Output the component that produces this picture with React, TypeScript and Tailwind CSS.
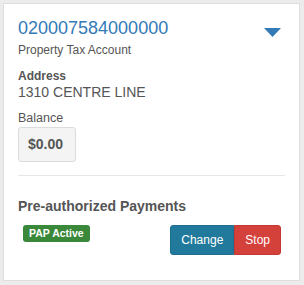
export default function App() {
  return (
    <div className="h-[285px] w-[304px] bg-[#ececec] p-[3px] font-['Liberation_Sans',Arial,sans-serif]">
      <div className="flex h-[278px] w-[297px] flex-col border border-[#dedede] bg-white px-[14px] pt-[14px]">
        {/* Account header */}
        <div className="flex items-start justify-between">
          <div>
            <div className="text-[18px] leading-[20px] text-[#337ab7]">020007584000000</div>
            <div className="mt-1 text-[12px] leading-[17px] text-[#555]">Property Tax Account</div>
          </div>
          <svg className="mr-[4px] mt-[10px]" width="17" height="9" viewBox="0 0 17 9">
            <path d="M0 0 L17 0 L8.5 9 Z" fill="#337ab7" />
          </svg>
        </div>

        {/* Address */}
        <div className="mt-[10px] text-[12px] font-bold leading-[15px] text-[#555]">Address</div>
        <div className="text-[14px] leading-[16px] text-[#555]">1310 CENTRE LINE</div>

        {/* Balance */}
        <div className="mt-[11px] text-[12.5px] leading-[15px] text-[#555]">Balance</div>
        <div className="mt-px flex h-[35px] w-[58px] items-center rounded-[3px] border border-[#dcdcdc] bg-[#f4f4f4] pl-[9px] text-[14px] font-bold text-[#555]">
          $0.00
        </div>

        <div className="mt-[13px] h-px bg-[#e6e6e6]" />

        {/* Pre-authorized payments */}
        <div className="mt-[22px] text-[14px] font-bold leading-[16px] text-[#555]">Pre-authorized Payments</div>
        <div className="mt-[11px] flex items-start justify-between px-[5px] pr-[4px]">
          <span className="rounded-[3px] bg-[#3a883a] px-[6px] pb-[3px] pt-[2px] text-[10.5px] font-bold leading-[12px] text-white">
            PAP Active
          </span>
          <div className="flex">
            <button className="flex h-[30px] items-center rounded-l-[3px] border border-[#1d6e8e] bg-[#217a9c] px-[10px] text-[12px] text-white">
              Change
            </button>
            <button className="flex h-[30px] items-center rounded-r-[3px] border border-[#c33a35] bg-[#d4403a] px-[10px] text-[12px] text-white">
              Stop
            </button>
          </div>
        </div>
      </div>
    </div>
  )
}
